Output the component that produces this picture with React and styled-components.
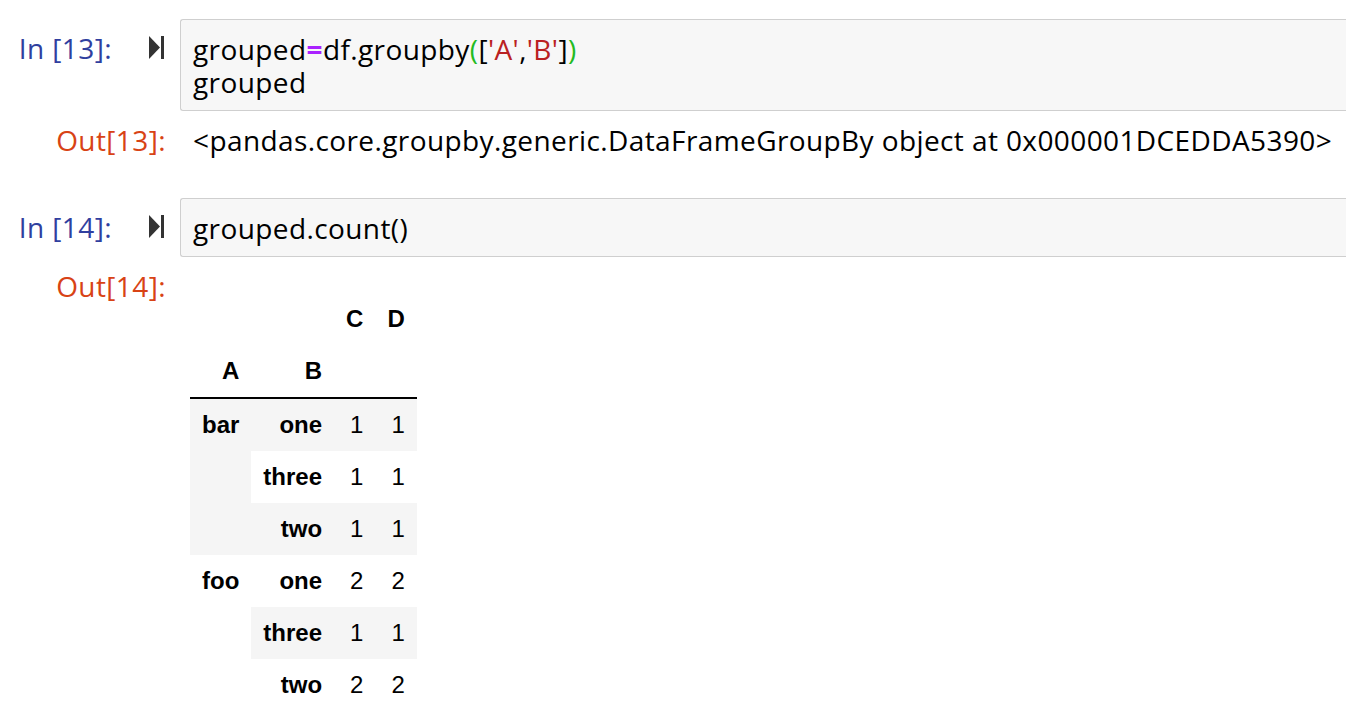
import React from 'react';
import styled, { createGlobalStyle } from 'styled-components';

const GlobalStyle = createGlobalStyle`
  body {
    margin: 0;
    background: #fff;
  }
`;

const Notebook = styled.div`
  padding-top: 19px;
  font-family: 'Open Sans', 'Noto Sans', sans-serif;
  font-size: 28px;
  letter-spacing: 0.4px;
  color: #000;
`;

const Cell = styled.div`
  display: flex;
  align-items: flex-start;
  margin-bottom: ${props => props.gap || 0}px;
`;

const InPrompt = styled.div`
  display: flex;
  align-items: flex-start;
  flex: 0 0 180px;
  padding-top: 13px;
  line-height: 33px;
`;

const PromptLabel = styled.div`
  width: 112px;
  text-align: right;
  color: #303f9f;
`;

const RunButton = styled.div`
  display: flex;
  align-items: center;
  height: 31px;
  margin-left: 37px;
  color: #333;
`;

const InputBox = styled.div`
  flex: 1;
  padding: 13px 12px 11px;
  background: #f7f7f7;
  border: 1px solid #cfcfcf;
  border-right: none;
  border-radius: 3px 0 0 3px;
`;

const CodeLine = styled.div`
  height: 33px;
  line-height: 33px;
  white-space: pre;
  overflow: visible;
`;

const OutPrompt = styled.div`
  flex: 0 0 180px;
  box-sizing: border-box;
  padding-right: 14px;
  text-align: right;
  line-height: 33px;
  color: #d84315;
`;

const OutputText = styled.div`
  padding-left: 13px;
  line-height: 33px;
  white-space: pre;
`;

const Tok = styled.span`
  color: ${props => props.c};
  font-weight: ${props => (props.bold ? 700 : 400)};
`;

const OutputArea = styled.div`
  padding-left: 10px;
  padding-top: 23px;
  letter-spacing: 0;
`;

const Table = styled.table`
  border-collapse: collapse;
  border-spacing: 0;
  font-family: 'Liberation Sans', Arial, sans-serif;
  font-size: 24px;
  color: #000;

  thead {
    border-bottom: 2px solid #000;
    vertical-align: bottom;
  }
`;

const Th = styled.th`
  padding: 12px;
  line-height: normal;
  text-align: right;
  font-weight: 700;
  vertical-align: ${props => (props.top ? 'top' : 'middle')};
  background: ${props => (props.shade ? '#f5f5f5' : 'transparent')};
`;

const Td = styled.td`
  padding: 12px;
  line-height: normal;
  text-align: right;
  background: ${props => (props.shade ? '#f5f5f5' : 'transparent')};
`;

const RunIcon = () => (
  <svg width="16" height="23" viewBox="0 0 16 23">
    <polygon points="0,0 11,11.5 0,23" fill="currentColor" />
    <rect x="12" y="0" width="3" height="23" fill="currentColor" />
  </svg>
);

const groups = [
  {
    key: 'bar',
    rows: [
      ['one', 1, 1],
      ['three', 1, 1],
      ['two', 1, 1],
    ],
  },
  {
    key: 'foo',
    rows: [
      ['one', 2, 2],
      ['three', 1, 1],
      ['two', 2, 2],
    ],
  },
];

const renderBody = () => {
  let rowIndex = 0;
  const out = [];
  groups.forEach((group, gi) => {
    const groupShade = rowIndex % 2 === 0;
    group.rows.forEach((row, ri) => {
      const shade = rowIndex % 2 === 0;
      out.push(
        <tr key={`${gi}-${ri}`}>
          {ri === 0 && (
            <Th rowSpan={group.rows.length} shade={groupShade} top>
              {group.key}
            </Th>
          )}
          <Th shade={shade}>{row[0]}</Th>
          <Td shade={shade}>{row[1]}</Td>
          <Td shade={shade}>{row[2]}</Td>
        </tr>
      );
      rowIndex += 1;
    });
  });
  return out;
};

export default function App() {
  return (
    <>
      <GlobalStyle />
      <Notebook>
        <Cell gap={13}>
          <InPrompt>
            <PromptLabel>In [13]:</PromptLabel>
            <RunButton><RunIcon /></RunButton>
          </InPrompt>
          <InputBox>
            <CodeLine>
              grouped<Tok c="#aa22ff" bold>=</Tok>df.groupby<Tok c="#22bb22">(</Tok>[<Tok c="#ba2121">'A'</Tok>,<Tok c="#ba2121">'B'</Tok>]<Tok c="#22bb22">)</Tok>
            </CodeLine>
            <CodeLine>grouped</CodeLine>
          </InputBox>
        </Cell>
        <Cell gap={41}>
          <OutPrompt>Out[13]:</OutPrompt>
          <OutputText>&lt;pandas.core.groupby.generic.DataFrameGroupBy object at 0x000001DCEDDA5390&gt;</OutputText>
        </Cell>
        <Cell gap={13}>
          <InPrompt>
            <PromptLabel>In [14]:</PromptLabel>
            <RunButton><RunIcon /></RunButton>
          </InPrompt>
          <InputBox>
            <CodeLine>grouped.count()</CodeLine>
          </InputBox>
        </Cell>
        <Cell>
          <OutPrompt>Out[14]:</OutPrompt>
          <OutputArea>
            <Table>
              <thead>
                <tr>
                  <Th />
                  <Th />
                  <Th>C</Th>
                  <Th>D</Th>
                </tr>
                <tr>
                  <Th>A</Th>
                  <Th>B</Th>
                  <Th />
                  <Th />
                </tr>
              </thead>
              <tbody>{renderBody()}</tbody>
            </Table>
          </OutputArea>
        </Cell>
      </Notebook>
    </>
  );
}
